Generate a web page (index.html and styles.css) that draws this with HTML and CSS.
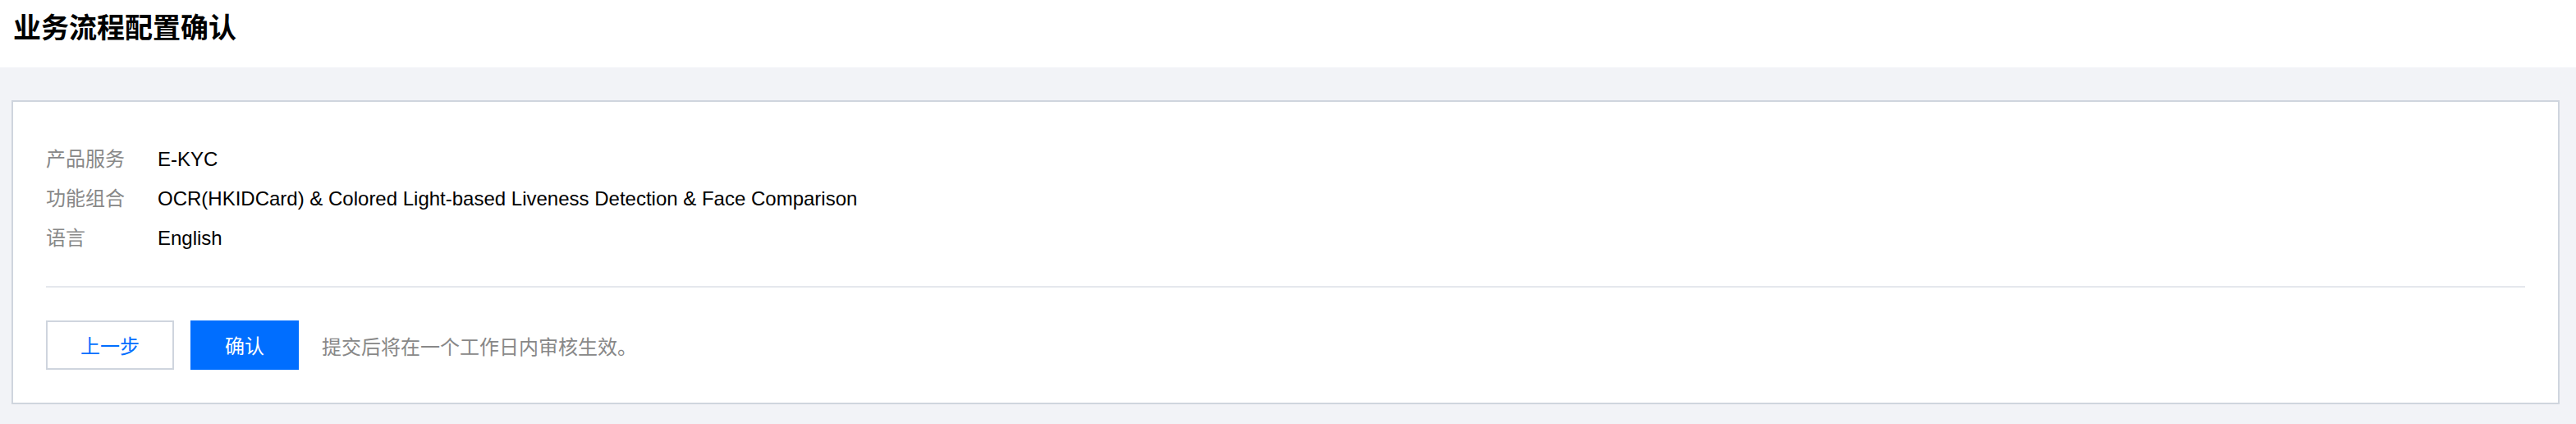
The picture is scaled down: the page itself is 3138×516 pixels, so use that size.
FILE: index.html
```html
<!DOCTYPE html>
<html lang="zh-CN">
<head>
<meta charset="utf-8">
<title>业务流程配置确认</title>
<link rel="stylesheet" href="styles.css">
</head>
<body>
<header class="page-header">
  <h1 class="page-title">业务流程配置确认</h1>
</header>
<main class="page-main">
  <section class="card">
    <ul class="info-list">
      <li class="info-row"><span class="info-label">产品服务</span><span class="info-value">E-KYC</span></li>
      <li class="info-row"><span class="info-label">功能组合</span><span class="info-value">OCR(HKIDCard) &amp; Colored Light-based Liveness Detection &amp; Face Comparison</span></li>
      <li class="info-row"><span class="info-label">语言</span><span class="info-value">English</span></li>
    </ul>
    <div class="actions">
      <button class="btn btn-default" type="button">上一步</button>
      <button class="btn btn-primary" type="button">确认</button>
      <span class="hint">提交后将在一个工作日内审核生效。</span>
    </div>
  </section>
</main>
</body>
</html>
```
FILE: styles.css
```css
* { box-sizing: border-box; }
html, body {
  margin: 0;
  padding: 0;
}
body {
  background: #f2f3f7;
  font-family: "Liberation Sans", "Noto Sans CJK SC", sans-serif;
  color: #000;
  width: 3138px;
  min-height: 516px;
}
.page-header {
  background: #fff;
  height: 82px;
  padding: 8px 16px 0;
}
.page-title {
  margin: 0;
  font-family: "Noto Sans CJK SC", sans-serif;
  font-size: 34px;
  line-height: 48px;
  font-weight: 700;
  color: #000;
}
.page-main {
  padding: 40px 20px 24px 14px;
}
.card {
  background: #fff;
  border: 2px solid #cfd5de;
  padding: 52px 40px 40px;
}
.info-list {
  list-style: none;
  margin: 0;
  padding: 0 0 40px;
  display: flex;
  flex-direction: column;
  gap: 12px;
  border-bottom: 2px solid #e5e8ed;
}
.info-row {
  display: flex;
  font-size: 24px;
  line-height: 36px;
}
.info-label {
  width: 136px;
  flex: none;
  color: #888;
}
.info-value {
  color: #000;
}
.actions {
  display: flex;
  align-items: center;
  margin-top: 40px;
}
.btn {
  height: 60px;
  font-family: "Noto Sans CJK SC", sans-serif;
  font-size: 24px;
  line-height: 56px;
  border: 2px solid #cfd5de;
  background: #fff;
  padding: 0 40px;
  margin: 0 20px 0 0;
  cursor: pointer;
}
.btn-default {
  color: #006eff;
}
.btn-primary {
  background: #006eff;
  border-color: #006eff;
  color: #fff;
  padding: 0 40px;
  margin-right: 28px;
}
.hint {
  font-family: "Noto Sans CJK SC", sans-serif;
  font-size: 24px;
  color: #888;
}
```
